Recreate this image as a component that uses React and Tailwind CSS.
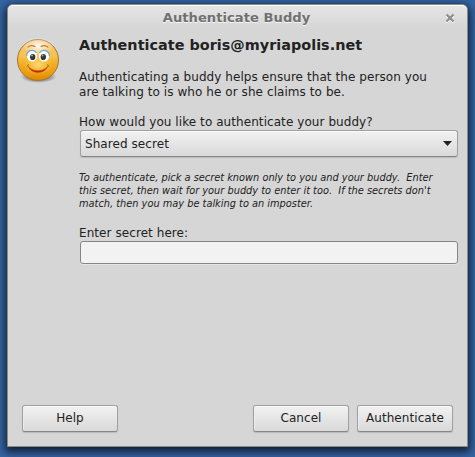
function Smiley() {
  return (
    <svg className="block h-[48px] w-[48px]" viewBox="0 0 48 48" aria-hidden="true">
      <defs>
        <linearGradient id="face" x1="0" y1="0" x2="0" y2="1">
          <stop offset="0" stopColor="#f3c37a" />
          <stop offset="0.4" stopColor="#f7c34e" />
          <stop offset="0.6" stopColor="#efad22" />
          <stop offset="0.85" stopColor="#e89b0c" />
          <stop offset="1" stopColor="#dc8500" />
        </linearGradient>
        <radialGradient id="shine">
          <stop offset="0" stopColor="#fff" stopOpacity="0.95" />
          <stop offset="1" stopColor="#fff" stopOpacity="0" />
        </radialGradient>
        <radialGradient id="cheeks">
          <stop offset="0" stopColor="#ffe58a" stopOpacity="0.8" />
          <stop offset="1" stopColor="#ffd860" stopOpacity="0" />
        </radialGradient>
        <radialGradient id="glow">
          <stop offset="0" stopColor="#222" stopOpacity="0.75" />
          <stop offset="0.7" stopColor="#444" stopOpacity="0.4" />
          <stop offset="1" stopColor="#555" stopOpacity="0" />
        </radialGradient>
      </defs>
      <ellipse cx="24.5" cy="40.5" rx="18" ry="6.5" fill="url(#glow)" />
      <circle cx="24" cy="24" r="20.5" fill="url(#face)" stroke="#a87338" strokeWidth="1" />
      <ellipse cx="24" cy="29" rx="15" ry="10" fill="url(#cheeks)" />
      <ellipse cx="24" cy="10" rx="16" ry="9" fill="url(#shine)" />
      <path d="M14 11.2Q17 8.4 21 10.6M27 10.6Q31 8.4 34 11.2" fill="none" stroke="#c9752c" strokeWidth="1.1" strokeLinecap="round" />
      <ellipse cx="18" cy="20" rx="5.2" ry="5.5" fill="#fff" />
      <ellipse cx="30" cy="20" rx="5.2" ry="5.5" fill="#fff" />
      <path d="M12.6 20A5.5 6 0 0 1 22.5 16.8M25.5 16.8A5.5 6 0 0 1 35.4 20" fill="none" stroke="#69a9dd" strokeWidth="1.2" />
      <ellipse cx="18.7" cy="21" rx="2.7" ry="3.1" fill="#343434" />
      <ellipse cx="29.3" cy="21" rx="2.7" ry="3.1" fill="#343434" />
      <circle cx="18" cy="19.5" r="1" fill="#aaa" />
      <circle cx="28.6" cy="19.5" r="1" fill="#aaa" />
      <path d="M14 30Q17 34.5 24 34.8Q31 34.5 34 30Q31 36.4 24 36.5Q17 36.4 14 30Z" fill="#c02c0a" stroke="#c02c0a" strokeWidth="0.4" />
      <path d="M13 30.2L14.6 28.8M33.4 28.8L35 30.2" stroke="#b35110" strokeWidth="1" strokeLinecap="round" />
    </svg>
  );
}

function Button({ children }) {
  return (
    <button className="flex h-[27px] w-[96px] items-center justify-center rounded-[3px] border border-[#a0a0a0] border-b-[#868686] bg-linear-to-b from-[#f2f2f2] to-[#d9d9d9] shadow-[0_1px_1px_#b9b9b9,inset_0_1px_0_#fbfbfb,inset_1px_0_0_#ededed]">
      {children}
    </button>
  );
}

export default function App() {
  return (
    <main className="h-[457px] w-[475px] overflow-hidden bg-[#3465a4] pt-[4px] pl-[7px] font-['DejaVu_Sans',sans-serif] text-[12px] leading-[15px] tracking-[0.07px] text-[#222]">
      <section className="flex h-[443px] w-[461px] flex-col rounded-t-[6px] border border-[#8b8b86] bg-[#d6d6d6] shadow-[0_3px_9px_2px_rgba(0,0,0,0.7)]">
        <header className="flex h-[24px] shrink-0 items-center rounded-t-[5px] border-t border-white bg-linear-to-b from-[#e5e5e5] to-[#d6d6d6] pl-[20px] pr-[12px]">
          <h1 className="flex-1 text-center text-[13.1px] font-bold tracking-[0.04px] text-[#707070] [text-shadow:0_1px_0_#f5f5f5]">Authenticate Buddy</h1>
          <svg className="h-[10px] w-[10px]" viewBox="0 0 10 10" aria-label="Close">
            <path d="M1.5 2.5L8.5 9.5M8.5 2.5L1.5 9.5" stroke="#fff" strokeWidth="2" />
            <path d="M1.5 1.5L8.5 8.5M8.5 1.5L1.5 8.5" stroke="#8c8c8c" strokeWidth="2.2" />
          </svg>
        </header>
        <div className="flex flex-1 pl-[6px] pr-[9px] pt-[7px]">
          <div className="w-[65px] shrink-0"><Smiley /></div>
          <div className="w-[380px]">
            <h2 className="h-[34px] pt-px text-[14.4px] font-bold leading-[17px] tracking-[0.02px] whitespace-nowrap">Authenticate boris@myriapolis.net</h2>
            <p className="h-[45px] whitespace-nowrap">Authenticating a buddy helps ensure that the person you<br />are talking to is who he or she claims to be.</p>
            <p className="h-[15px]">How would you like to authenticate your buddy?</p>
            <button className="ml-px flex h-[27px] w-[378px] items-center justify-between rounded-[3px] border border-[#a0a0a0] border-b-[#868686] bg-linear-to-b from-[#f2f2f2] to-[#d9d9d9] pr-[5px] pl-[4px] pt-px shadow-[0_1px_1px_#b9b9b9,inset_0_1px_0_#fbfbfb]">
              <span>Shared secret</span>
              <svg className="mb-[2px] h-[5px] w-[9px]" viewBox="0 0 9 5"><path d="M0 0H9L4.5 5Z" fill="#222" /></svg>
            </button>
            <p className="mt-[14px] h-[55px] text-[9.8px] italic leading-[13px] tracking-normal whitespace-pre">{"To authenticate, pick a secret known only to you and your buddy.  Enter\nthis secret, then wait for your buddy to enter it too.  If the secrets don't\nmatch, then you may be talking to an imposter."}</p>
            <label className="block">
              <span className="block h-[15px]">Enter secret here:</span>
              <input className="ml-px block h-[23px] w-[378px] rounded-[3px] border border-[#858585] bg-[#f2f2f2] px-[5px] shadow-[0_1px_0_#e5e5e5] outline-none" />
            </label>
          </div>
        </div>
        <footer className="flex h-[41px] shrink-0 items-start pl-[14px] pr-[14px]">
          <div className="flex-1"><Button>Help</Button></div>
          <div className="flex gap-[8px]">
            <Button>Cancel</Button>
            <Button>Authenticate</Button>
          </div>
        </footer>
      </section>
    </main>
  );
}
